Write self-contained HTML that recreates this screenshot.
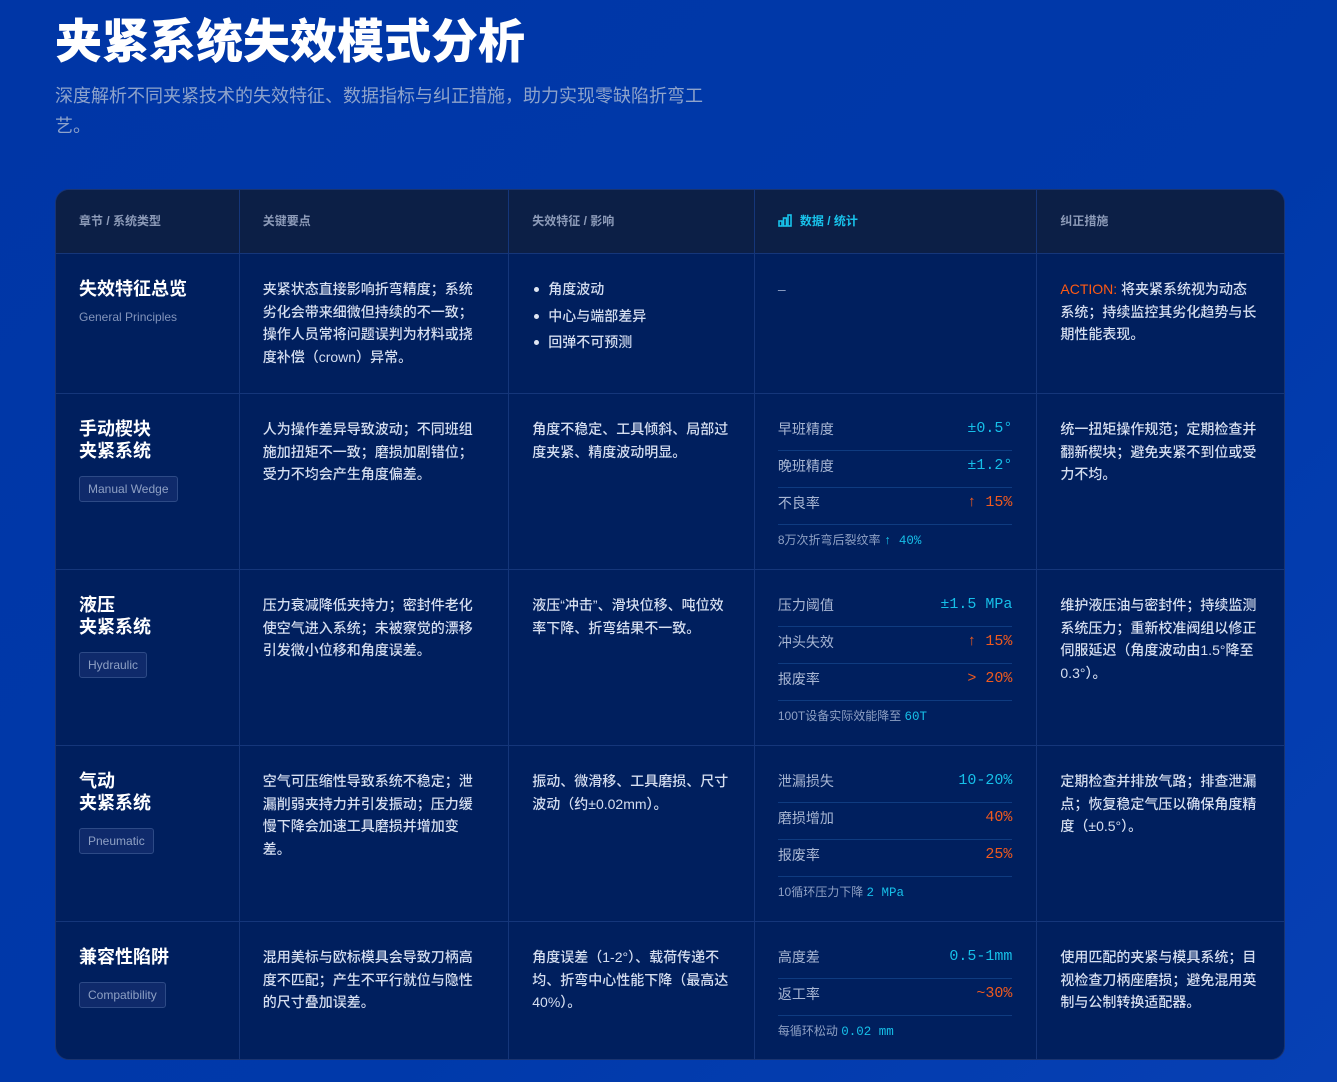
<!DOCTYPE html>
<html><head><meta charset="utf-8"><style>
*{margin:0;padding:0;box-sizing:border-box}
body{width:1337px;height:1082px;overflow:hidden;background:linear-gradient(135deg,#0036a6 0%,#0039aa 60%,#0740b4 100%);font-family:"Liberation Sans","Noto Sans CJK SC",sans-serif;color:#dfe6f3}
h1{position:absolute;left:55px;top:13px;font-size:47px;font-weight:900;color:#fff;line-height:58px}
.sub{position:absolute;left:55px;top:81px;width:660px;font-size:18px;line-height:30px;color:#8ea3cb}
.tbl{position:absolute;left:55px;top:189px;width:1230px;height:871px;background:#001f5e;border-radius:14px;overflow:hidden;border:1px solid #1a3470}
.row{display:flex;border-bottom:1px solid #15367a}
.row:last-child{border-bottom:none}
.c{padding:24px 24px 24px 23px;font-size:14px;line-height:22.6px;border-right:1px solid #15367a;color:#d5def0;font-weight:500}
.c:last-child{border-right:none}
.c1{width:184px}.c2{width:270px}.c3{width:246px}.c4{width:283px}.c5{width:247px}
.hd{background:#0c1f46;height:64px}
.hd .c{font-size:12px;font-weight:700;color:#8d9bb8;line-height:62px;padding-top:0;padding-bottom:0}
.t{font-size:18px;font-weight:700;color:#fff;line-height:22px}
.en{font-size:12px;color:#8294bb;margin-top:6px}
.tag{display:inline-block;margin-top:14px;font-size:12px;color:#8ea0c4;border:1px solid #2d4a86;background:#0f2a6b;border-radius:3px;padding:3px 8px;line-height:18px}
ul{list-style:none}
li{position:relative;padding-left:16px;line-height:26.5px;margin-top:-2px;margin-bottom:2px}
li:before{content:"";position:absolute;left:2px;top:11px;width:5px;height:5px;border-radius:50%;background:#dfe6f3}
.st{padding-top:20px}
.sr{display:flex;justify-content:space-between;height:37px;line-height:30px;border-bottom:1px solid #0f3b80;font-size:14px;color:#a8b6d3;font-weight:400}
.v{font-family:"Liberation Mono","DejaVu Sans Mono",monospace;color:#16bfe8;font-size:15px}
.o{color:#f05a1e}
.note{font-size:12px;color:#8ea0c4;margin-top:4px;font-weight:400}
.note b{font-family:"Liberation Mono",monospace;color:#16bfe8;font-weight:400;font-size:12.5px}
.act{color:#ff5a14;font-weight:400}
</style></head><body>
<h1>夹紧系统失效模式分析</h1>
<div class="sub">深度解析不同夹紧技术的失效特征、数据指标与纠正措施，助力实现零缺陷折弯工艺。</div>
<div class="tbl">
<div class="row hd">
<div class="c c1">章节 / 系统类型</div><div class="c c2">关键要点</div><div class="c c3">失效特征 / 影响</div>
<div class="c c4" style="color:#18c3ec"><svg width="14" height="13" viewBox="0 0 14 13" style="vertical-align:-2px;margin-right:8px" fill="none" stroke="#18c3ec" stroke-width="1.6"><rect x="1" y="7" width="3" height="5"/><rect x="5.5" y="4" width="3" height="8"/><rect x="10" y="1" width="3" height="11"/></svg>数据 / 统计</div>
<div class="c c5">纠正措施</div></div>

<div class="row" style="height:140px">
<div class="c c1"><div class="t">失效特征总览</div><div class="en">General Principles</div></div>
<div class="c c2">夹紧状态直接影响折弯精度；系统劣化会带来细微但持续的不一致；操作人员常将问题误判为材料或挠度补偿（crown）异常。</div>
<div class="c c3"><ul><li>角度波动</li><li>中心与端部差异</li><li>回弹不可预测</li></ul></div>
<div class="c c4" style="color:#8ea0c4">–</div>
<div class="c c5"><span class="act">ACTION:</span> 将夹紧系统视为动态系统；持续监控其劣化趋势与长期性能表现。</div></div>

<div class="row" style="height:176px">
<div class="c c1"><div class="t">手动楔块<br>夹紧系统</div><div class="tag">Manual Wedge</div></div>
<div class="c c2">人为操作差异导致波动；不同班组施加扭矩不一致；磨损加剧错位；受力不均会产生角度偏差。</div>
<div class="c c3">角度不稳定、工具倾斜、局部过度夹紧、精度波动明显。</div>
<div class="c c4 st"><div class="sr"><span>早班精度</span><span class="v">±0.5°</span></div><div class="sr"><span>晚班精度</span><span class="v">±1.2°</span></div><div class="sr"><span>不良率</span><span class="v o">↑ 15%</span></div><div class="note">8万次折弯后裂纹率 <b>↑ 40%</b></div></div>
<div class="c c5">统一扭矩操作规范；定期检查并翻新楔块；避免夹紧不到位或受力不均。</div></div>

<div class="row" style="height:176px">
<div class="c c1"><div class="t">液压<br>夹紧系统</div><div class="tag">Hydraulic</div></div>
<div class="c c2">压力衰减降低夹持力；密封件老化使空气进入系统；未被察觉的漂移引发微小位移和角度误差。</div>
<div class="c c3">液压“冲击”、滑块位移、吨位效率下降、折弯结果不一致。</div>
<div class="c c4 st"><div class="sr"><span>压力阈值</span><span class="v">±1.5 MPa</span></div><div class="sr"><span>冲头失效</span><span class="v o">↑ 15%</span></div><div class="sr"><span>报废率</span><span class="v o">&gt; 20%</span></div><div class="note">100T设备实际效能降至 <b>60T</b></div></div>
<div class="c c5">维护液压油与密封件；持续监测系统压力；重新校准阀组以修正伺服延迟（角度波动由1.5°降至0.3°）。</div></div>

<div class="row" style="height:176px">
<div class="c c1"><div class="t">气动<br>夹紧系统</div><div class="tag">Pneumatic</div></div>
<div class="c c2">空气可压缩性导致系统不稳定；泄漏削弱夹持力并引发振动；压力缓慢下降会加速工具磨损并增加变差。</div>
<div class="c c3">振动、微滑移、工具磨损、尺寸波动（约±0.02mm）。</div>
<div class="c c4 st"><div class="sr"><span>泄漏损失</span><span class="v">10-20%</span></div><div class="sr"><span>磨损增加</span><span class="v o">40%</span></div><div class="sr"><span>报废率</span><span class="v o">25%</span></div><div class="note">10循环压力下降 <b>2 MPa</b></div></div>
<div class="c c5">定期检查并排放气路；排查泄漏点；恢复稳定气压以确保角度精度（±0.5°）。</div></div>

<div class="row" style="height:139px">
<div class="c c1"><div class="t">兼容性陷阱</div><div class="tag">Compatibility</div></div>
<div class="c c2">混用美标与欧标模具会导致刀柄高度不匹配；产生不平行就位与隐性的尺寸叠加误差。</div>
<div class="c c3">角度误差（1-2°）、载荷传递不均、折弯中心性能下降（最高达40%）。</div>
<div class="c c4 st"><div class="sr"><span>高度差</span><span class="v">0.5-1mm</span></div><div class="sr"><span>返工率</span><span class="v o">~30%</span></div><div class="note">每循环松动 <b>0.02 mm</b></div></div>
<div class="c c5">使用匹配的夹紧与模具系统；目视检查刀柄座磨损；避免混用英制与公制转换适配器。</div></div>
</div>
</body></html>
